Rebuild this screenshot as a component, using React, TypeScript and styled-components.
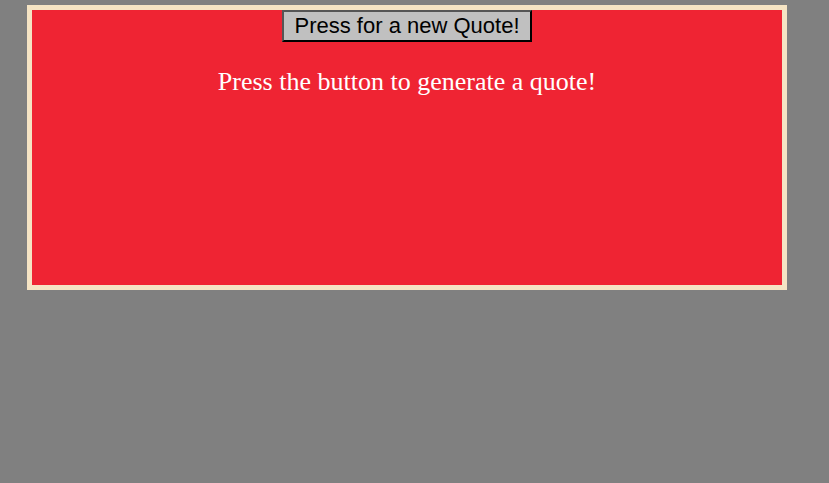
import React from "react";
import styled, { createGlobalStyle } from "styled-components";

const Global = createGlobalStyle`
  html, body { margin: 0; padding: 0; background: #808080; }
  body { width: 829px; height: 483px; overflow: hidden; }
`;

const Page = styled.div`
  padding: 5px 0 0 27px;
`;

const Card = styled.div`
  box-sizing: border-box;
  width: 760px;
  height: 285px;
  border: 5px solid #f5e4c4;
  background: #ef2433;
  display: flex;
  flex-direction: column;
  align-items: center;
`;

const Button = styled.button`
  box-sizing: border-box;
  width: 250px;
  height: 32px;
  margin: 0;
  padding: 0;
  font-family: "Liberation Sans", Arial, sans-serif;
  font-size: 22px;
  line-height: 26px;
  color: #000;
  background: #c0c0c0;
  border: 2px solid;
  border-color: #555 #000 #000 #555;
  cursor: pointer;
`;

const Quote = styled.p`
  margin: 25px 0 0;
  font-family: "Liberation Serif", "Times New Roman", serif;
  font-size: 26px;
  color: #fff;
  text-align: center;
`;

export default function App() {
  return (
    <>
      <Global />
      <Page>
        <Card>
          <Button>Press for a new Quote!</Button>
          <Quote>Press the button to generate a quote!</Quote>
        </Card>
      </Page>
    </>
  );
}
